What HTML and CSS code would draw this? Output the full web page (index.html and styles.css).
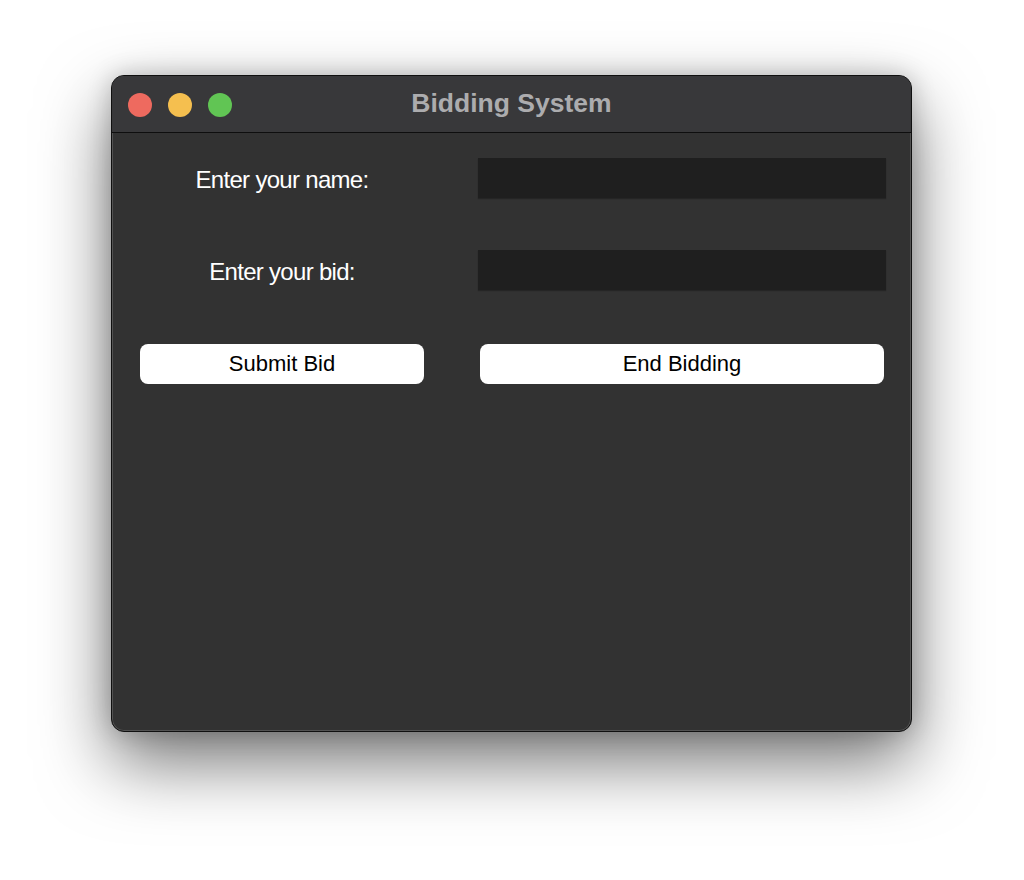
FILE: index.html
```html
<!DOCTYPE html>
<html>
<head>
<meta charset="utf-8">
<link rel="stylesheet" href="styles.css">
</head>
<body>
<div class="window">
  <div class="titlebar">
    <div class="lights">
      <span class="light red"></span>
      <span class="light yellow"></span>
      <span class="light green"></span>
    </div>
    <div class="title">Bidding System</div>
    <div></div>
  </div>
  <div class="content">
    <div class="label">Enter your name:</div>
    <div class="field"></div>
    <div class="label">Enter your bid:</div>
    <div class="field"></div>
    <div class="btn btn-left">Submit Bid</div>
    <div class="btn btn-right">End Bidding</div>
  </div>
</div>
</body>
</html>
```
FILE: styles.css
```css
html, body {
  margin: 0;
  background: #ffffff;
}
body {
  padding: 75px 0 0 111px;
  height: 880px;
  box-sizing: border-box;
  font-family: "Liberation Sans", Arial, sans-serif;
}
.window {
  width: 801px;
  height: 657px;
  box-sizing: border-box;
  background: #323232;
  border: 1px solid #101010;
  border-radius: 13px;
  box-shadow: inset 0 0 0 1px rgba(255,255,255,0.16), 0 30px 70px rgba(0,0,0,0.55), 0 0 24px rgba(0,0,0,0.2);
  overflow: hidden;
}
.titlebar {
  height: 56px;
  background: #38383a;
  border-bottom: 1px solid #0e0e0e;
  display: grid;
  grid-template-columns: 1fr auto 1fr;
  align-items: center;
}
.lights {
  display: flex;
  gap: 16px;
  padding-left: 16px;
  padding-top: 1px;
}
.light {
  width: 24px;
  height: 24px;
  border-radius: 50%;
  display: block;
}
.red { background: #ee6a5f; }
.yellow { background: #f5bf4f; }
.green { background: #61c554; }
.title {
  color: #acacae;
  font-weight: bold;
  font-size: 26.5px;
  padding-bottom: 2px;
}
.content {
  display: grid;
  grid-template-columns: 284px 408px;
  grid-template-rows: 40px 40px 40px;
  column-gap: 54px;
  row-gap: 52px;
  padding: 25px 0 0 28px;
}
.label {
  color: #ffffff;
  font-size: 24px;
  letter-spacing: -0.7px;
  display: flex;
  align-items: center;
  justify-content: center;
  padding-top: 3px;
}
.field {
  background: #1f1f1f;
  box-shadow: 0 1px 1px rgba(0,0,0,0.25);
}
.btn {
  background: #ffffff;
  color: #000000;
  border-radius: 8px;
  font-size: 22px;
  display: flex;
  align-items: center;
  justify-content: center;
  margin-top: 2px;
  margin-bottom: -2px;
}
.btn-right {
  margin-left: 2px;
  margin-right: 2px;
}
```
